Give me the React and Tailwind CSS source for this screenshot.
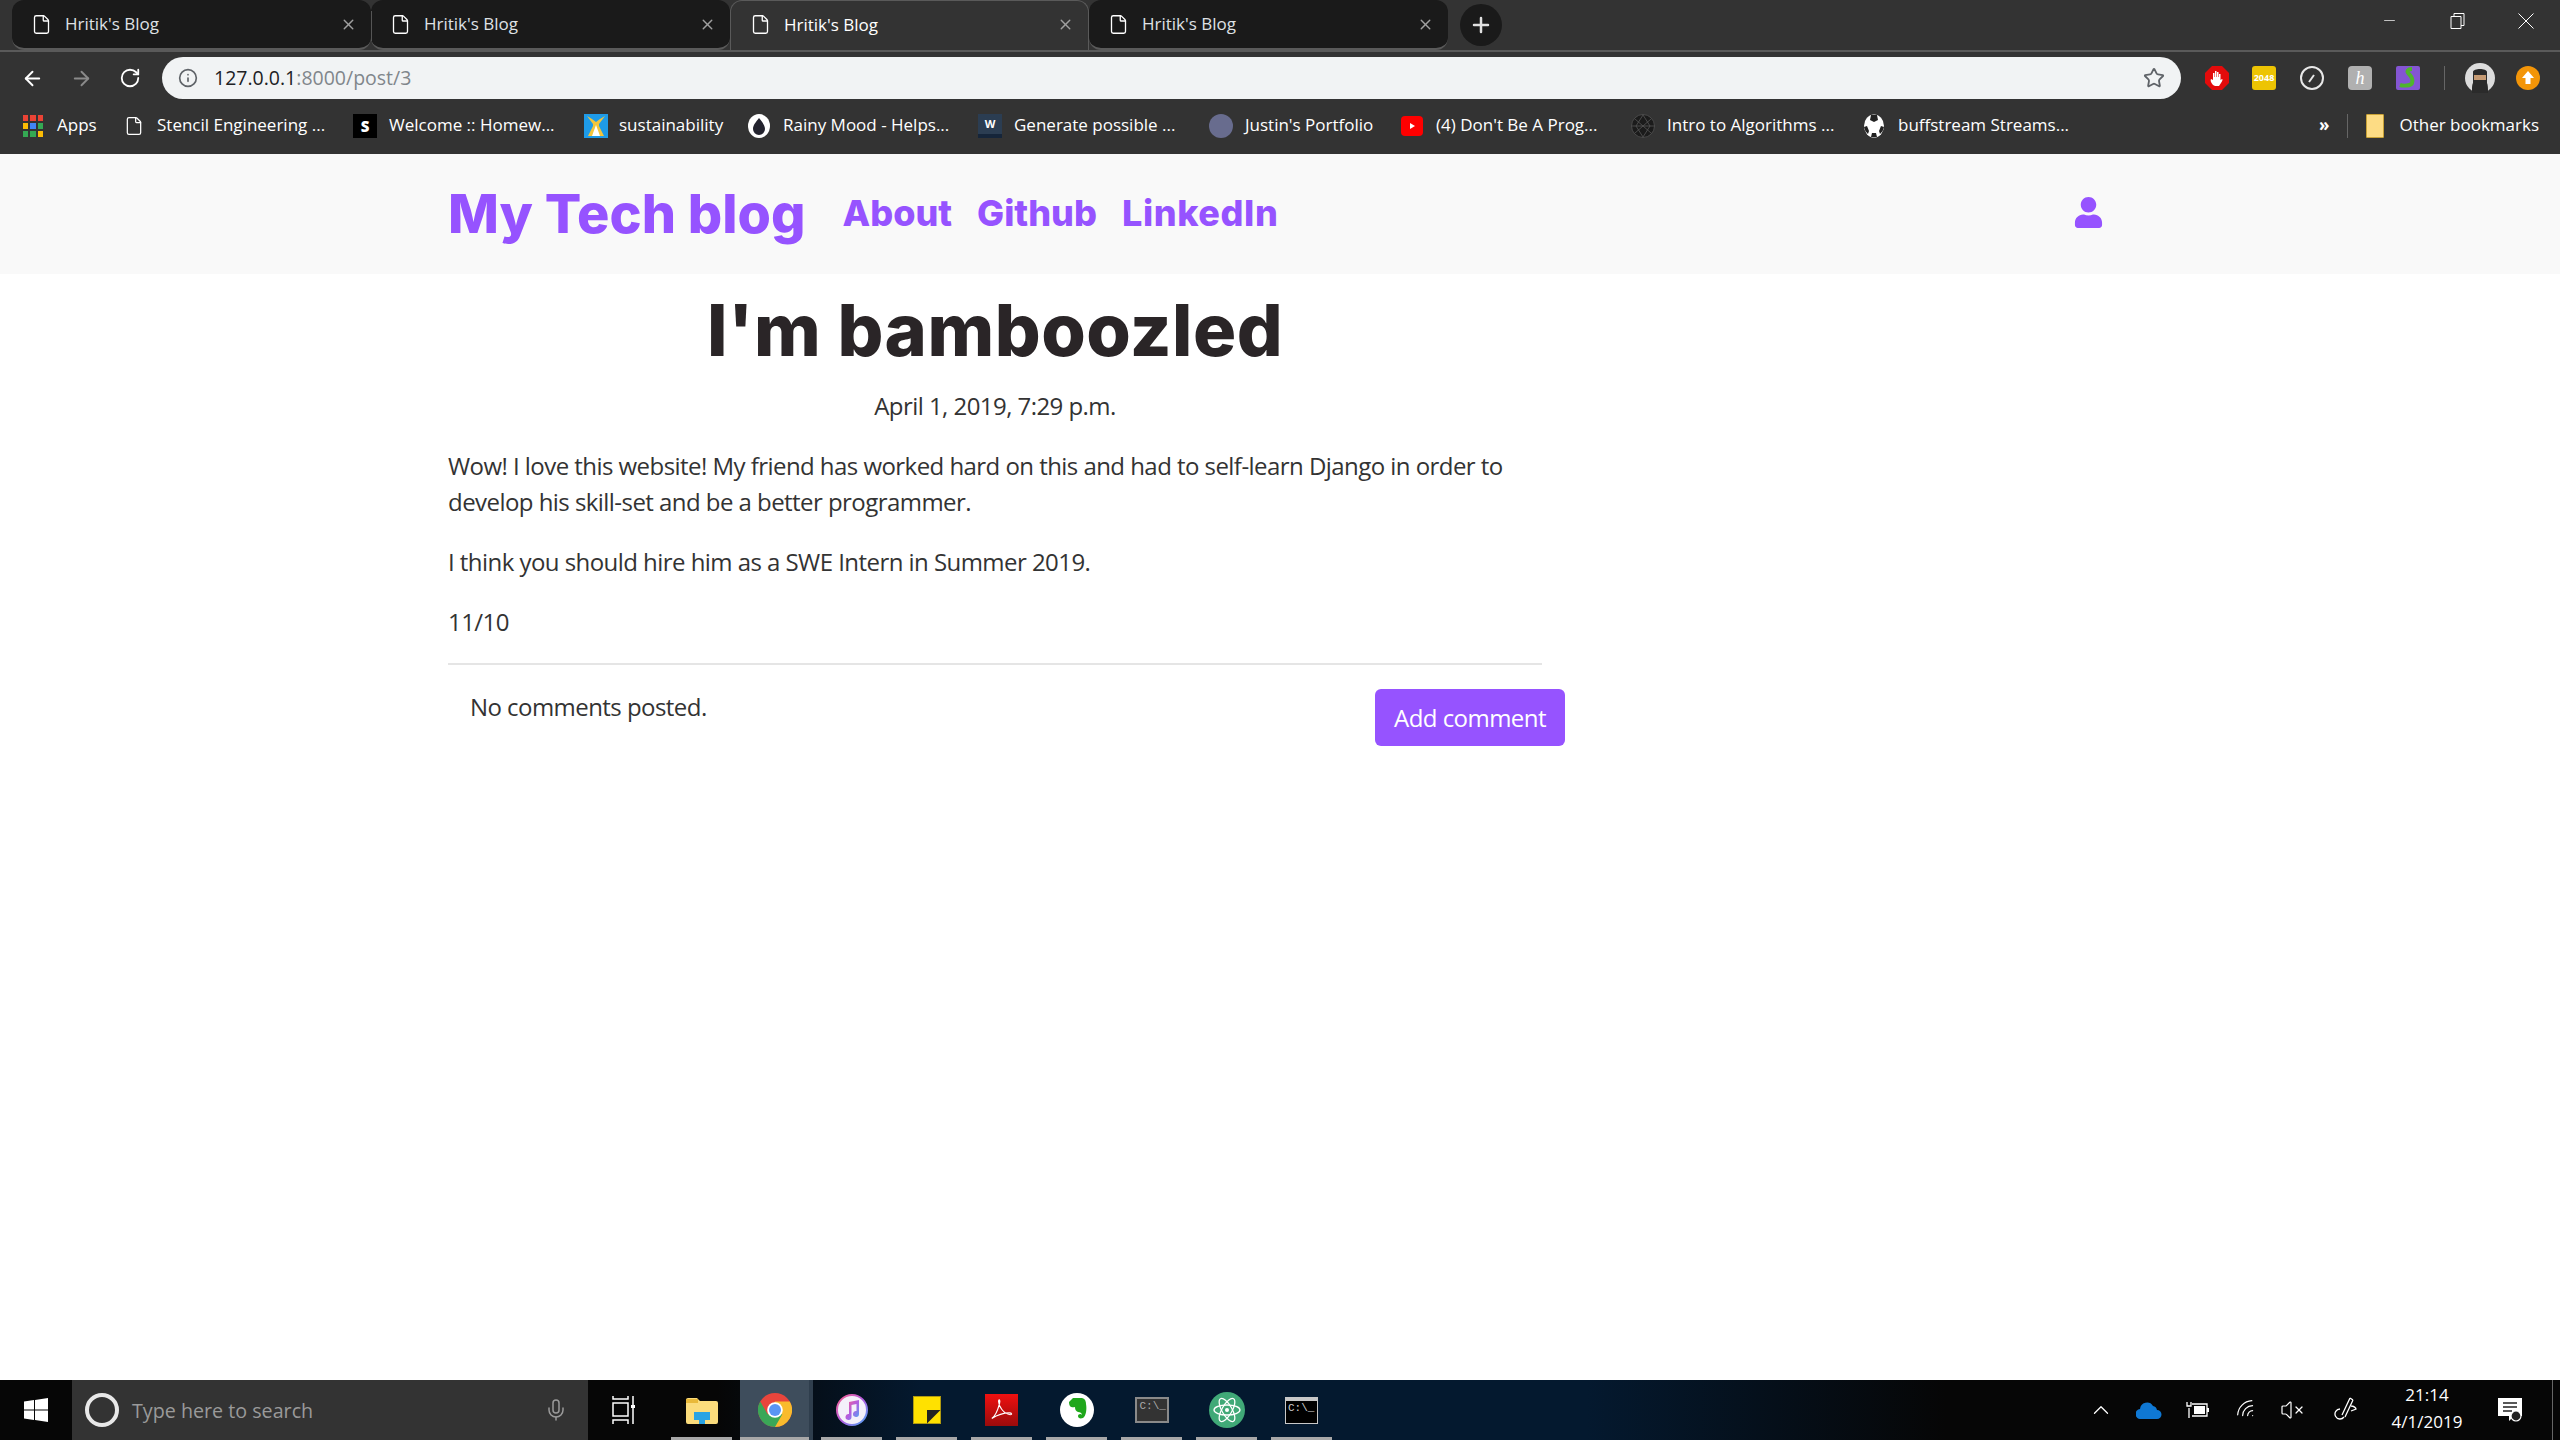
import { ArrowLeft, ArrowRight, RotateCw, Info, Star, X, Plus, File, ChevronUp, Mic, Minus, VolumeX, Wifi } from "lucide-react";
import { FaUser } from "react-icons/fa";

const UI_FONT = "font-['Open_Sans',sans-serif]";

const BOOKMARKS = [
  { w: "w-[101px]", gap: "gap-[14px]", text: "Apps", icon: <AppsIcon /> },
  { w: "w-[229px]", gap: "gap-[13px]", text: "Stencil Engineering ...", icon: <File size={20} strokeWidth={1.5} className="text-white" /> },
  { w: "w-[231px]", gap: "gap-[12px]", text: "Welcome :: Homew...", icon: <div className="w-6 h-6 bg-black text-white text-[15px] font-black flex items-center justify-center">S</div> },
  { w: "w-[164px]", gap: "gap-[11px]", text: "sustainability", icon: <SustainIcon /> },
  { w: "w-[230px]", gap: "gap-[13px]", text: "Rainy Mood - Helps...", icon: <RainyIcon /> },
  { w: "w-[231px]", gap: "gap-[12px]", text: "Generate possible ...", icon: <div className="w-6 h-6 bg-[#2b3d52] border-b-4 border-[#15253a] text-white text-[11px] font-bold flex items-center justify-center">W</div> },
  { w: "w-[192px]", gap: "gap-[12px]", text: "Justin's Portfolio", icon: <div className="w-6 h-6 rounded-full bg-[#686c8e]" /> },
  { w: "w-[230px]", gap: "gap-[13px]", text: "(4) Don't Be A Prog...", icon: <YoutubeIcon /> },
  { w: "w-[233px]", gap: "gap-[12px]", text: "Intro to Algorithms ...", icon: <IntroIcon /> },
  { w: "w-[210px]", gap: "gap-[14px]", text: "buffstream Streams...", icon: <BallIcon /> },
];

const TASK_ITEMS = [
  { cls: "w-[61px] mr-[8px]", icon: <ExplorerIcon /> },
  { cls: "w-[73px] mr-[8px] bg-[#3e4d5c] border-r-4 border-[#2f3e4d]", icon: <ChromeIcon /> },
  { cls: "w-[61px] mr-[14px]", icon: <ItunesIcon /> },
  { cls: "w-[61px] mr-[14px]", icon: <StickyIcon /> },
  { cls: "w-[61px] mr-[14px]", icon: <AcrobatIcon /> },
  { cls: "w-[61px] mr-[14px]", icon: <EvernoteIcon /> },
  { cls: "w-[61px] mr-[14px]", icon: <CmdIcon /> },
  { cls: "w-[61px] mr-[14px]", icon: <AtomIcon /> },
  { cls: "w-[61px]", icon: <TerminalIcon /> },
];

function AppsIcon() {
  const colors = ["#ea4335", "#ea4335", "#ea4335", "#fbbc05", "#4285f4", "#34a853", "#34a853", "#34a853", "#fbbc05"];
  return (
    <div className="w-5 h-6 grid grid-cols-3 gap-[2px] py-[1px]">
      {colors.map((c, i) => (
        <span key={i} style={{ background: c }} />
      ))}
    </div>
  );
}

function SustainIcon() {
  return (
    <svg width="24" height="24" viewBox="0 0 24 24">
      <rect width="24" height="24" fill="#1e9be8" />
      <path d="M3 2l6 8v2l-5 10h5l3-6 3 6h5l-5-10v-2l6-8-5 3-4 3-4-3z" fill="#f3c53c" />
      <path d="M12 11l4 11h-8z" fill="#fff" />
    </svg>
  );
}

function RainyIcon() {
  return (
    <svg width="22" height="24" viewBox="0 0 22 24">
      <ellipse cx="11" cy="12" rx="11" ry="12" fill="#fff" />
      <path d="M11 4c3 4 6 7 6 11a6 6 0 0 1-12 0c0-4 3-7 6-11z" fill="#23232e" />
    </svg>
  );
}

function YoutubeIcon() {
  return (
    <svg width="22" height="24" viewBox="0 0 22 24">
      <rect y="2" width="22" height="20" rx="4" fill="#f00" />
      <path d="M9 9l5 3-5 3z" fill="#fff" />
    </svg>
  );
}

function IntroIcon() {
  return (
    <svg width="24" height="24" viewBox="0 0 24 24" stroke="#555" fill="#1b1b1b" strokeWidth="0.8">
      <circle cx="12" cy="12" r="11.5" />
      <path d="M12 1L5 12l7 11 7-11zM1 12h22M4 5l16 14M20 5L4 19" fill="none" />
    </svg>
  );
}

function BallIcon() {
  return (
    <svg width="20" height="24" viewBox="0 0 20 24">
      <ellipse cx="10" cy="12" rx="10" ry="11.5" fill="#fff" />
      <path d="M7 1h6l1 5-4 2-4-2zM0 13l3-1 2 5-1 3a10 11 0 0 1-4-7zM20 13l-3-1-2 5 1 3a10 11 0 0 0 4-7zM8 19h4l1 4H7z" fill="#222" />
    </svg>
  );
}

function ExplorerIcon() {
  return (
    <svg width="32" height="28" viewBox="0 0 32 28">
      <path d="M0 4a2 2 0 0 1 2-2h9l3 3h16a2 2 0 0 1 2 2v19a2 2 0 0 1-2 2H2a2 2 0 0 1-2-2z" fill="#fbdc7c" />
      <path d="M0 3h12v4H0z" fill="#e9b93a" />
      <path d="M8 16h16v8h-5v4h-6v-4H8z" fill="#29a3e4" />
    </svg>
  );
}

function ChromeIcon() {
  return (
    <svg width="34" height="34" viewBox="0 0 48 48">
      <circle cx="24" cy="24" r="24" fill="#e8453c" />
      <path d="M24 48a24 24 0 0 0 20.8-36H24l-10.4 18z" fill="#f9bb2d" />
      <path d="M3.2 12A24 24 0 0 0 24 48l10.4-18H13.6z" fill="#3aa757" />
      <circle cx="24" cy="24" r="11" fill="#fff" />
      <circle cx="24" cy="24" r="8.5" fill="#5a95f5" />
    </svg>
  );
}

function ItunesIcon() {
  return (
    <svg width="32" height="32" viewBox="0 0 32 32">
      <defs>
        <linearGradient id="itunes" x1="0" y1="0" x2="1" y2="1">
          <stop offset="0" stopColor="#f7618c" />
          <stop offset="0.5" stopColor="#b45ce0" />
          <stop offset="1" stopColor="#4ba8f5" />
        </linearGradient>
      </defs>
      <circle cx="16" cy="16" r="15" fill="#f4f0fa" stroke="url(#itunes)" strokeWidth="2" />
      <path d="M13 8l10-2v14a3 3 0 1 1-2.500-3V10l-5 1v12a3 3 0 1 1-2.500-3z" fill="url(#itunes)" />
    </svg>
  );
}

function StickyIcon() {
  return (
    <svg width="28" height="28" viewBox="0 0 28 28">
      <rect x="0.500" y="0.500" width="27" height="27" fill="#ffe100" stroke="#b09a10" />
      <path d="M14 27.500V14h13.500z" fill="#222" />
    </svg>
  );
}

function AcrobatIcon() {
  return (
    <svg width="33" height="32" viewBox="0 0 34 34" preserveAspectRatio="none">
      <defs>
        <linearGradient id="acro" x1="0" y1="0" x2="0" y2="1">
          <stop offset="0" stopColor="#f01010" />
          <stop offset="1" stopColor="#9a0b0b" />
        </linearGradient>
      </defs>
      <rect width="34" height="34" fill="url(#acro)" />
      <path d="M7 26c3-2 6-8 8-16 1-4-1-5-1-2 0 5 5 13 12 14 2 0 2-2-1-2-5 0-12 2-18 6z" fill="none" stroke="#fff" strokeWidth="1.200" />
    </svg>
  );
}

function EvernoteIcon() {
  return (
    <svg width="34" height="34" viewBox="0 0 34 34">
      <circle cx="17" cy="17" r="17" fill="#fff" />
      <path d="M9 9l4-4h8c3 0 5 2 5 6 1 5 0 12-3 14-3 1-5 0-5-2s3-3 4-1c0-2-2-3-4-3-2-1-3-2-3-5-3 1-6 0-6-5z" fill="#1fa71b" />
    </svg>
  );
}

function CmdIcon() {
  return (
    <div className="w-[34px] h-[26px] bg-[#333] border-2 border-[#8a8a8a] pl-[3px] text-[11px] leading-[14px] text-[#aaa] font-['Liberation_Mono',monospace]">
      C:\_
    </div>
  );
}

function AtomIcon() {
  return (
    <svg width="36" height="36" viewBox="0 0 36 36" fill="none">
      <circle cx="18" cy="18" r="18" fill="#40a977" />
      <g stroke="#fff" strokeWidth="1.300">
        <ellipse cx="18" cy="18" rx="13" ry="5" />
        <ellipse cx="18" cy="18" rx="13" ry="5" transform="rotate(60 18 18)" />
        <ellipse cx="18" cy="18" rx="13" ry="5" transform="rotate(120 18 18)" />
      </g>
      <circle cx="18" cy="18" r="2" fill="#fff" />
    </svg>
  );
}

function TerminalIcon() {
  return (
    <div className="w-[33px] h-[27px] bg-black border-[1.5px] border-[#c8c8c8] border-t-[4px] pl-[2px] text-[11px] leading-[14px] text-[#ccc] font-['Liberation_Mono',monospace]">
      C:\_
    </div>
  );
}

function Tab({ active, sep }) {
  return (
    <div
      className={`relative w-[359px] h-[50px] flex items-center pl-[19px] pr-[14px] ${
        active ? "bg-[#333333] border border-b-0 border-[#5a5a5a] rounded-t-[12px] z-10 pb-[2px]" : "bg-[#1a1a1a] rounded-[12px] border-b-2 border-[#5a5a5a]"
      }`}
    >
      {sep && <span className="absolute left-0 top-[11px] h-[30px] w-px bg-[#555]" />}
      <File size={21} strokeWidth={1.5} className="text-white shrink-0" />
      <span className={`ml-[13px] text-[17px] flex-1 ${active ? "text-white" : "text-[#dfe1e5]"}`}>Hritik's Blog</span>
      <X size={17} className="text-[#a0a0a0]" />
    </div>
  );
}

function BrowserChrome() {
  return (
    <div className={`bg-[#333333] h-[154px] ${UI_FONT}`}>
      {/* Tabs */}
      <div className="h-[50px] flex items-start border-b-2 border-[#5a5a5a] box-content -mb-[2px]">
        <div className="w-[12px]" />
        <Tab />
        <Tab sep />
        <Tab active />
        <Tab />
        <div className="ml-[12px] mt-[4px] w-[42px] h-[42px] rounded-full bg-[#1a1a1a] flex items-center justify-center">
          <Plus size={24} strokeWidth={2.5} className="text-[#e0e0e0]" />
        </div>
        <div className="ml-auto flex items-start pt-[13px] text-white">
          <Minus size={17} strokeWidth={1} className="mr-[52px] -mt-[1px]" />
          <svg width="16" height="16" viewBox="0 0 16 16" fill="none" stroke="#fff" className="mr-[52px]">
            <path d="M4 3.500V.5h10v12h-3M1 3.500h10v12H1z" />
          </svg>
          <svg width="16" height="16" viewBox="0 0 16 16" fill="none" stroke="#fff" className="mr-[26px]">
            <path d="M.5.5l15 15M15.500.5l-15 15" />
          </svg>
        </div>
      </div>

      {/* Toolbar */}
      <div className="h-[47px] mt-[2px] flex items-center pt-[5px]">
        <div className="w-[162px] flex items-center pl-[21px] gap-[26px]">
          <ArrowLeft size={23} className="text-white" />
          <ArrowRight size={23} className="text-[#8a8a8a]" />
          <RotateCw size={22} className="text-white" />
        </div>
        <div className="w-[2019px] h-[42px] rounded-full bg-[#f1f3f4] flex items-center pl-[16px] pr-[16px]">
          <Info size={20} className="text-[#5f6368]" />
          <span className="ml-[16px] text-[19.500px] text-[#202124]">
            127.0.0.1<span className="text-[#80868b]">:8000/post/3</span>
          </span>
          <Star size={22} strokeWidth={2} className="ml-auto text-[#5f6368]" />
        </div>
        <div className="flex items-center pl-[24px] gap-[24px]">
          <svg width="24" height="24" viewBox="0 0 24 24" className="-mr-[1px]">
            <path d="M7 0h10l7 7v10l-7 7H7l-7-7V7z" fill="#e30b0b" />
            <path d="M8 19c-2-2-3-5-2-6l2 1V7h1.500v4H10V5h1.500v6H12V6h1.500v5H14V8h1.500v6l1.500-1c1 0 .5 2-1 4l-2 3h-4z" fill="#fff" />
          </svg>
          <div className="w-6 h-6 rounded-[3px] bg-[#edc403] text-white text-[9px] font-bold flex items-center justify-center">2048</div>
          <svg width="24" height="24" viewBox="0 0 24 24" fill="none">
            <circle cx="12" cy="12" r="11" fill="#333" stroke="#e8e8e8" strokeWidth="2" />
            <path d="M9 16l5-7" stroke="#e8e8e8" strokeWidth="2" />
          </svg>
          <div className="w-6 h-6 rounded-[4px] bg-[#b0b0b0] text-white text-[18px] italic flex items-center justify-center font-['Liberation_Serif',serif]">h</div>
          <svg width="24" height="24" viewBox="0 0 24 24">
            <rect width="24" height="24" rx="2" fill="#8455d3" />
            <path d="M16 3c-4 0-6 2-3 5s4 6 3 9-9 3-12 2" fill="none" stroke="#4fb52c" strokeWidth="4" />
          </svg>
          <div className="w-px h-[24px] bg-[#666]" />
          <svg width="30" height="30" viewBox="0 0 30 30" className="-ml-[4px]">
            <circle cx="15" cy="15" r="15" fill="#dcdcdc" />
            <path d="M7 30c0-6 0-8 1-10V9c0-4 14-4 14 0v11c1 2 1 5 1 10z" fill="#2b2b2b" />
            <rect x="9" y="12" width="12" height="5" fill="#c59a73" />
          </svg>
          <svg width="24" height="24" viewBox="0 0 24 24" className="-ml-[3px]">
            <circle cx="12" cy="12" r="12" fill="#f39508" />
            <path d="M12 5l6 7h-3.500v6h-5v-6H6z" fill="#fff" />
          </svg>
        </div>
      </div>

      {/* Bookmarks */}
      <div className="h-[55px] flex items-center pl-[23px] pb-[1px] text-[17px] text-white">
        {BOOKMARKS.map((b) => (
          <div key={b.text} className={`${b.w} ${b.gap} flex items-center shrink-0`}>
            {b.icon}
            <span className="whitespace-nowrap -mt-[2px]">{b.text}</span>
          </div>
        ))}
        <div className="ml-auto flex items-center pr-[21px]">
          <span className="font-bold -mt-[2px]">»</span>
          <div className="w-px h-[24px] bg-[#666] ml-[18px] mr-[18px]" />
          <div className="w-[18px] h-[24px] bg-[#fddc84] border border-[#c9a236] rounded-[1px]" />
          <span className="ml-[15px] whitespace-nowrap -mt-[2px]">Other bookmarks</span>
        </div>
      </div>
    </div>
  );
}

function Taskbar() {
  return (
    <div className={`h-[60px] shrink-0 flex items-stretch text-white bg-[linear-gradient(90deg,#060606_0%,#060606_28%,#04192f_36%,#04192f_62%,#060606_76%,#060606_100%)] ${UI_FONT}`}>
      <div className="w-[72px] flex items-center justify-center">
        <svg width="24" height="24" viewBox="0 0 24 24" fill="#fff">
          <path d="M0 3.500l10-1.400v9.300H0zM11 2l13-2v11.400H11zM0 12.500h10v9.400l-10-1.400zM11 12.500h13V24l-13-2z" />
        </svg>
      </div>
      <div className="w-[516px] bg-[#333333] flex items-center pl-[13px] pr-[20px]">
        <div className="w-[34px] h-[34px] rounded-full border-[4px] border-[#e8e8e8]" />
        <span className="ml-[13px] mt-[2px] text-[19.700px] text-[#9a9a9a]">Type here to search</span>
        <Mic size={24} strokeWidth={1.5} className="ml-auto text-[#9a9a9a]" />
      </div>
      <div className="w-[83px] flex items-center pl-[24px]">
        <svg width="24" height="30" viewBox="0 0 24 30" fill="none" stroke="#fff" strokeWidth="1.500">
          <path d="M1 1v3h15V1M1 8h15v13H1zM1 29v-4h15v4M21 1v28" />
          <rect x="19" y="10" width="4" height="3" fill="#fff" stroke="none" />
        </svg>
      </div>
      {TASK_ITEMS.map((t, i) => (
        <div key={i} className={`${t.cls} relative flex items-center justify-center shrink-0`}>
          {t.icon}
          <span className="absolute left-0 right-0 bottom-0 h-[3px] bg-[#a8a8a8]" />
        </div>
      ))}
      <div className="ml-auto flex items-center text-white">
        <ChevronUp size={26} strokeWidth={1.2} />
        <svg width="26" height="18" viewBox="0 0 26 18" className="ml-[22px]">
          <path d="M5 18a5 5 0 0 1-1-10 7 7 0 0 1 13-3 5 5 0 0 1 4 4 4.500 4.500 0 0 1 0 9z" fill="#0f78d4" />
        </svg>
        <svg width="26" height="18" viewBox="0 0 26 18" fill="none" stroke="#fff" strokeWidth="1.300" className="ml-[22px]">
          <path d="M5 7V10M3 1v4h4V1M5 10v7M8 3h15v12H8" />
          <rect x="10" y="5" width="11" height="8" fill="#fff" stroke="none" />
          <path d="M24 7v4" strokeWidth="2" />
        </svg>
        <Wifi size={24} strokeWidth={1.2} className="ml-[25px] -rotate-45" />
        <VolumeX size={24} strokeWidth={1.2} className="ml-[21px]" />
        <svg width="24" height="26" viewBox="0 0 24 26" fill="none" stroke="#fff" strokeWidth="1.300" className="ml-[30px]">
          <path d="M16 1l-8 17M19 3l-8 17M16 1l3 2M6 12a5 5 0 1 0 4 8M17 9c3 0 5 2 5 3l-5 2" />
        </svg>
        <div className="w-[100px] ml-[19px] text-center text-[17px] leading-[27px] -mt-[4px]">
          <div>21:14</div>
          <div>4/1/2019</div>
        </div>
        <svg width="26" height="26" viewBox="0 0 26 26" className="ml-[20px]">
          <path d="M1 1h24v18h-8l-5 5v-5H1z" fill="#fff" />
          <path d="M6 6h14M6 10h14M6 14h9" stroke="#222" strokeWidth="1.300" />
          <circle cx="19" cy="19" r="5" fill="#222" stroke="#fff" strokeWidth="1.200" />
        </svg>
        <div className="w-px h-full bg-[#666] ml-[29px] mr-[7px]" />
      </div>
    </div>
  );
}

export default function App() {
  return (
    <div className={`h-screen flex flex-col bg-white overflow-hidden ${UI_FONT}`}>
      <BrowserChrome />

      {/* Navbar */}
      <nav className="h-[120px] shrink-0 bg-[#f9f9f9]">
        <div className="ml-[448px] w-[1656px] h-full flex items-center pb-[2px] text-[#9653ff] font-['Inter',sans-serif] font-extrabold">
          <span className="text-[54px] mr-[37px] whitespace-nowrap">My Tech blog</span>
          <span className="text-[36px] mr-[25px]">About</span>
          <span className="text-[36px] mr-[25px]">Github</span>
          <span className="text-[36px] tracking-[0.6px]">LinkedIn</span>
          <FaUser size={31} className="ml-auto -mt-[1px]" />
        </div>
      </nav>

      {/* Post */}
      <main className="flex-1 ml-[448px] text-[#333333] text-[24px] leading-[36px] tracking-[-0.55px]">
        <div className="w-[1094px]">
          <h1 className="mt-[14px] mb-[16px] text-center text-[72px] leading-[84px] tracking-[0.5px] font-extrabold text-[#2a2527] font-['Inter',sans-serif]">
            I'm bamboozled
          </h1>
          <p className="text-center mb-6">April 1, 2019, 7:29 p.m.</p>
          <p className="mb-6">
            Wow! I love this website! My friend has worked hard on this and had to self-learn Django in order to develop his skill-set and be a better programmer.
          </p>
          <p className="mb-6">I think you should hire him as a SWE Intern in Summer 2019.</p>
          <p className="mb-[23px]">11/10</p>
          <hr className="border-t-2 border-[#e5e5e5]" />
        </div>
        <div className="w-[1117px] flex justify-between items-start pl-[22px] mt-[24px]">
          <p>No comments posted.</p>
          <button className="w-[190px] h-[57px] bg-[#9653ff] text-white rounded-[6px]">Add comment</button>
        </div>
      </main>

      <Taskbar />
    </div>
  );
}
